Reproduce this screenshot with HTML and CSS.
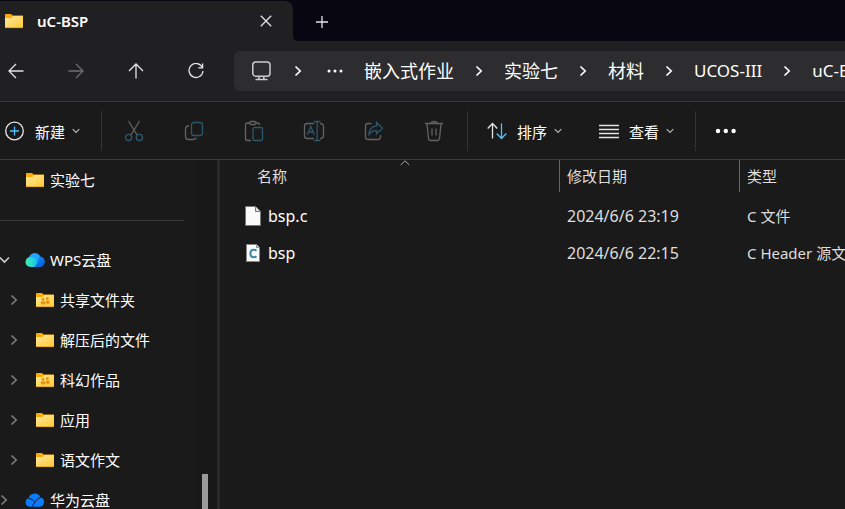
FILE: index.html
```html
<!DOCTYPE html>
<html lang="zh-CN">
<head>
    <meta charset="UTF-8">
    <meta name="viewport" content="width=device-width, initial-scale=1.0">
    <title>uC-BSP</title>
    <link rel="stylesheet" href="styles.css">
</head>
<body>
    <svg class="defs" aria-hidden="true">
        <defs>
            <linearGradient id="folder-fill" x1="0" y1="0" x2="1" y2="1">
                <stop offset="0" stop-color="#ffe9a0"/>
                <stop offset="1" stop-color="#ffc830"/>
            </linearGradient>
            <linearGradient id="cloud-left" x1="0" y1="0" x2="1" y2="0">
                <stop offset="0" stop-color="#43edb0"/>
                <stop offset="1" stop-color="#08b9fb"/>
            </linearGradient>
            <linearGradient id="cloud-right" x1="0" y1="0" x2="1" y2="1">
                <stop offset="0" stop-color="#1596ff"/>
                <stop offset="1" stop-color="#0754d8"/>
            </linearGradient>
            <symbol id="folder" viewBox="0 0 18 16">
                <path d="M0 1.5Q0 1 .6 1H6l1.6 1.5H18V9H0z" fill="#f9ab0c"/>
                <path d="M0 5h6.5L8 3h9.4q.6 0 .6.6V14q0 1-1 1H1q-1 0-1-1z" fill="url(#folder-fill)"/>
                <path d="M.2 14.6h17.6" stroke="#e8a92b"/>
            </symbol>
            <symbol id="shared-folder" viewBox="0 0 18 16">
                <use href="#folder"/>
                <g fill="#e4950d">
                    <circle cx="7" cy="7.3" r="1.4"/>
                    <circle cx="11.3" cy="6.5" r="1.4"/>
                    <rect x="4.8" y="9.3" width="4.4" height="3.2" rx="1"/>
                    <rect x="9.7" y="8.6" width="3.8" height="3.2" rx="1"/>
                </g>
            </symbol>
            <symbol id="right" viewBox="0 0 8 12">
                <path d="M1.5 1.5 6.2 6l-4.7 4.5" fill="none" stroke="currentColor" stroke-width="1.7"/>
            </symbol>
            <symbol id="down" viewBox="0 0 8 6">
                <path d="M.7 1.2 4 4.5l3.3-3.3" fill="none" stroke="currentColor" stroke-width="1.1"/>
            </symbol>
        </defs>
    </svg>

    <header>
        <div class="titlebar">
            <div class="tab">
                <svg class="folder"><use href="#folder"/></svg>
                <span class="tab-title">uC-BSP</span>
                <button class="close" aria-label="关闭">
                    <svg width="12" height="12" viewBox="0 0 12 12"><path d="m.8.8 10.4 10.4M11.2.8.8 11.2"/></svg>
                </button>
            </div>
            <button class="new-tab" aria-label="新建标签页">
                <svg width="14" height="14" viewBox="0 0 14 14"><path d="M7 1v12M1 7h12"/></svg>
            </button>
        </div>

        <nav class="navbar">
            <div class="nav-buttons">
                <button aria-label="后退"><svg width="16" height="16" viewBox="0 0 16 16"><path d="M15.5 8H1M8 1 1 8l7 7"/></svg></button>
                <button class="off" disabled aria-label="前进"><svg width="16" height="16" viewBox="0 0 16 16"><path d="M.5 8H15M8 1l7 7-7 7"/></svg></button>
                <button aria-label="上移"><svg width="16" height="16" viewBox="0 0 16 16"><path d="M8 15.5V1M1 8l7-7 7 7"/></svg></button>
                <button aria-label="刷新"><svg width="16" height="16" viewBox="0 0 16 16"><path d="M14.4 4.6A7 7 0 1 0 15 8M14.6.5v4.3h-4.3"/></svg></button>
            </div>
            <div class="address">
                <svg class="monitor" width="22" height="20" viewBox="0 0 22 20">
                    <rect x="1.8" y="1" width="17.2" height="14.2" rx="3"/>
                    <path d="M8 15.5v3M12.8 15.5v3M4.5 18.6h12"/>
                </svg>
                <svg class="right"><use href="#right"/></svg>
                <button class="more-path" aria-label="更多">
                    <svg width="20" height="4" viewBox="0 0 20 4"><circle cx="6" cy="2" r="1.5"/><circle cx="12" cy="2" r="1.5"/><circle cx="18" cy="2" r="1.5"/></svg>
                </button>
                <a href="#">嵌入式作业</a>
                <svg class="right"><use href="#right"/></svg>
                <a href="#">实验七</a>
                <svg class="right"><use href="#right"/></svg>
                <a href="#">材料</a>
                <svg class="right"><use href="#right"/></svg>
                <a class="latin" href="#">UCOS-III</a>
                <svg class="right"><use href="#right"/></svg>
                <a class="latin" href="#">uC-BSP</a>
            </div>
        </nav>
    </header>

    <div class="toolbar">
        <button class="command">
            <svg width="20" height="20" viewBox="0 0 20 20"><circle cx="9.5" cy="10" r="8.8"/><path class="blue" d="M9.5 5.5v9M5 10h9"/></svg>
            <span>新建</span>
            <svg class="down"><use href="#down"/></svg>
        </button>
        <span class="divider"></span>
        <div class="icons">
            <button disabled aria-label="剪切">
                <svg width="20" height="22" viewBox="0 0 20 22"><path d="m4.5 1 8.6 14M15.5 1 6.9 15"/><g class="blue"><circle cx="4.6" cy="17.5" r="3.1"/><circle cx="15.4" cy="17.5" r="3.1"/></g></svg>
            </button>
            <button disabled aria-label="复制">
                <svg width="20" height="20" viewBox="0 0 20 20"><path d="M5 5H4Q1.500 5 1.500 8v7.500q0 3 3 3H9q3 0 3-2"/><rect class="blue" x="7.500" y="1.500" width="11" height="13" rx="2.500"/></svg>
            </button>
            <button disabled aria-label="粘贴">
                <svg width="20" height="22" viewBox="0 0 20 22"><path d="M6 3H3.500Q1.500 3 1.500 5v13.500q0 2 2 2H7M11 3h2.500q2 0 2 2"/><rect x="5.500" y="1.500" width="6.500" height="3" rx="1.500"/><rect class="blue" x="9" y="7.500" width="9.500" height="13" rx="1.500"/></svg>
            </button>
            <button disabled aria-label="重命名">
                <svg width="22" height="22" viewBox="0 0 22 22"><path d="M11 3.500H4q-2.500 0-2.500 2.500v10q0 2.500 2.500 2.500h7M17 3.500q3.500 0 3.500 3v9q0 3-3.500 3"/><path class="blue" d="m4.200 15 3.600-8.500L11.400 15M5.300 12h5M14.200 2v18.500M11 1.500h6.500M11 20.500h6.500"/></svg>
            </button>
            <button disabled aria-label="共享">
                <svg width="20" height="20" viewBox="0 0 20 20"><path d="M7.500 2.500H4Q1.500 2.500 1.500 5v11q0 2.500 2.500 2.500h10q2.500 0 2.500-2.500v-2"/><path class="blue" d="M12.500 1.500 18.500 7.300l-6 5.700V9.700Q8 9.500 5 13.500 5.500 5.500 12.500 4.900z"/></svg>
            </button>
            <button disabled aria-label="删除">
                <svg width="20" height="22" viewBox="0 0 20 22"><path d="M1 3.500h18M7 3.500q0-2 3-2t3 2M3 4l1.500 14.500q.2 2 2 2h7q1.800 0 2-2L17 4M8 8.500v7M12 8.500v7"/></svg>
            </button>
        </div>
        <span class="divider"></span>
        <button class="command second">
            <svg width="20" height="18" viewBox="0 0 20 18"><path d="M5.500 16.500V1.500M.7 6.500l4.800-5 4.800 5"/><path class="blue" d="M14.500 1.500v15M9.700 11.500l4.800 5 4.800-5"/></svg>
            <span>排序</span>
            <svg class="down"><use href="#down"/></svg>
        </button>
        <button class="command view">
            <svg width="20" height="16" viewBox="0 0 20 16"><path d="M0 2.500h20M0 6.500h20M0 10.500h20M0 14.500h20"/></svg>
            <span>查看</span>
            <svg class="down"><use href="#down"/></svg>
        </button>
        <span class="divider last"></span>
        <button class="more" aria-label="查看更多">
            <svg width="22" height="6" viewBox="0 0 22 6"><circle cx="3" cy="3" r="2.200"/><circle cx="10.800" cy="3" r="2.200"/><circle cx="18.600" cy="3" r="2.200"/></svg>
        </button>
    </div>

    <main>
        <aside>
            <ul class="tree">
                <li><span class="arrow"></span><svg class="folder"><use href="#folder"/></svg>实验七</li>
                <li class="line"></li>
                <li>
                    <svg class="arrow open" viewBox="0 0 10 8"><path d="m0 1.500 4.500 4.500L9 1.500"/></svg>
                    <svg class="cloud" viewBox="0 0 20 16">
                        <circle cx="14.500" cy="9.800" r="5.200" fill="url(#cloud-right)"/>
                        <circle cx="9.800" cy="7" r="6" fill="#1da7ff"/>
                        <path d="M5.500 5Q9 5 12 9l3 6H5.500a5 5 0 0 1 0-10z" fill="url(#cloud-left)"/>
                        <path d="M14.500 4.600a5.200 5.200 0 0 1 0 10.400H9q2.500-1.500 3.500-6z" fill="url(#cloud-right)"/>
                    </svg>WPS云盘
                </li>
                <li class="child"><svg class="arrow"><use href="#right"/></svg><svg class="folder"><use href="#shared-folder"/></svg>共享文件夹</li>
                <li class="child"><svg class="arrow"><use href="#right"/></svg><svg class="folder"><use href="#folder"/></svg>解压后的文件</li>
                <li class="child"><svg class="arrow"><use href="#right"/></svg><svg class="folder"><use href="#shared-folder"/></svg>科幻作品</li>
                <li class="child"><svg class="arrow"><use href="#right"/></svg><svg class="folder"><use href="#folder"/></svg>应用</li>
                <li class="child"><svg class="arrow"><use href="#right"/></svg><svg class="folder"><use href="#folder"/></svg>语文作文</li>
                <li>
                    <svg class="arrow"><use href="#right"/></svg>
                    <svg class="cloud" viewBox="0 0 20 16">
                        <path d="M5 14.800A4.500 4.500 0 0 1 3.800 6 6.200 6.200 0 0 1 15.400 5.200 4.900 4.900 0 0 1 14.500 14.800z" fill="#0a7cff"/>
                        <path d="M3.600 6.500q4.400.2 6 3.500M16 5.300q-3.500.4-6 4.700l-3 4.600" fill="none" stroke="#1a1a1a" stroke-width="1"/>
                    </svg>华为云盘
                </li>
            </ul>
            <div class="scroll"><div class="thumb"></div></div>
        </aside>

        <section class="files">
            <table>
                <colgroup><col class="col-name"><col class="col-date"><col class="col-type"></colgroup>
                <thead>
                    <tr>
                        <th>名称<svg class="sorted" viewBox="0 0 10 6"><path d="M.7 5 5 .8 9.300 5"/></svg></th>
                        <th>修改日期</th>
                        <th>类型</th>
                    </tr>
                </thead>
                <tbody>
                    <tr>
                        <td>
                            <div class="name">
                                <svg width="16" height="20" viewBox="0 0 16 20"><path d="M.5.500h10l5 5v14H.5z" fill="#fafafa" stroke="#777"/><path d="M10.500.500v5h5" fill="#ddd" stroke="#777"/></svg>
                                bsp.c
                            </div>
                        </td>
                        <td class="date">2024/6/6 23:19</td>
                        <td class="type">C 文件</td>
                    </tr>
                    <tr>
                        <td>
                            <div class="name">
                                <svg width="16" height="20" viewBox="0 0 16 20"><path d="M1.500 1.500h10l3 3v14h-13z" fill="#fafafa" stroke="#888"/><path d="M11.500 1.500v3h3" fill="#ddd" stroke="#888"/><path d="M11.500 7.700Q10.400 6.700 8.800 6.700 5.400 6.700 5.400 10.500t3.400 3.800q1.600 0 2.700-1" fill="none" stroke="#3c87a8" stroke-width="2"/></svg>
                                bsp
                            </div>
                        </td>
                        <td class="date">2024/6/6 22:15</td>
                        <td class="type">C Header 源文件</td>
                    </tr>
                </tbody>
            </table>
        </section>
    </main>
</body>
</html>
```

FILE: styles.css
```css
* {
    box-sizing: border-box;
}
body {
    margin: 0;
    height: 100vh;
    display: flex;
    flex-direction: column;
    overflow: hidden;
    background: #1a1a1a;
    color: #fff;
    font-family: "Noto Sans", "Noto Sans CJK SC", sans-serif;
    font-size: 15px;
    line-height: 20px;
}
button {
    display: flex;
    align-items: center;
    justify-content: center;
    padding: 0;
    border: none;
    background: none;
    color: inherit;
    font: inherit;
}
svg {
    flex: none;
}
button svg {
    fill: none;
    stroke: #e4e4e4;
    stroke-width: 1.3;
}
.defs {
    position: absolute;
    width: 0;
    height: 0;
}
.folder {
    width: 18px;
    height: 16px;
}
.right {
    width: 8px;
    height: 12px;
}
.down {
    width: 8px;
    height: 6px;
}

/* Tabs */
.titlebar {
    display: flex;
    height: 41px;
    background: #080611;
}
.tab {
    position: relative;
    display: flex;
    align-items: center;
    width: 293px;
    margin-top: 1px;
    padding: 0 21px 0 5px;
    background: #202023;
    border-radius: 0 8px 0 0;
}
.tab::after {
    content: "";
    position: absolute;
    left: 100%;
    bottom: 0;
    width: 5px;
    height: 5px;
    background: radial-gradient(circle at 100% 0, transparent 5px, #202023 5px);
}
.tab-title {
    margin-left: 14px;
    font-size: 15px;
    font-weight: 600;
}
.close {
    margin-left: auto;
}
.new-tab {
    width: 58px;
    padding-top: 3px;
}

/* Navigation */
.navbar {
    display: flex;
    align-items: center;
    gap: 22px;
    height: 61px;
    background: #202023;
    border-bottom: 1px solid #3a3a3d;
}
.nav-buttons {
    display: flex;
    gap: 28px;
}
.nav-buttons button {
    width: 32px;
    height: 32px;
}
.off {
    opacity: 0.4;
}
.address {
    flex: 1;
    display: flex;
    align-items: center;
    gap: 21px;
    min-width: 0;
    height: 40px;
    padding-left: 17px;
    overflow: hidden;
    background: #2d2d2f;
    border-radius: 6px 0 0 6px;
    font-size: 18px;
    white-space: nowrap;
}
.address a {
    color: #fff;
    text-decoration: none;
}
.address .latin {
    font-size: 17px;
}
.monitor {
    fill: none;
    stroke: #ccc;
    stroke-width: 1.5;
}
.more-path svg,
.more svg {
    fill: #fff;
    stroke: none;
}

/* Commands */
.toolbar {
    display: flex;
    align-items: center;
    flex: none;
    height: 58px;
    padding-left: 5px;
    border-bottom: 1px solid #3c3c3c;
}
.command {
    display: flex;
    gap: 10px;
}
.command span {
    padding-top: 2px;
}
.command .down {
    margin-left: -3px;
    color: #bbb;
}
.divider {
    width: 1px;
    height: 40px;
    margin: 0 2px 0 21px;
    background: #333;
}
.blue,
button .blue {
    stroke: #4cc2ff;
}
.icons {
    display: flex;
}
.icons + .divider {
    margin: 0 19px 0 3px;
}
.icons button {
    width: 60px;
    height: 40px;
}
.icons svg {
    opacity: 0.36;
}
.view {
    margin-left: 37px;
}
.last {
    margin-right: 19px;
}

/* Folder tree */
main {
    flex: 1;
    display: flex;
    min-height: 0;
}
aside {
    display: flex;
    flex: none;
    width: 220px;
    overflow: hidden;
    border-right: 3px solid #292929;
}
.tree {
    flex: 1;
    margin: 0;
    padding: 0 10px 0 0;
    list-style: none;
}
.tree li {
    display: flex;
    align-items: center;
    height: 40px;
    white-space: nowrap;
}
.tree .child {
    padding-left: 10px;
}
.tree .line::before {
    content: "";
    width: 100%;
    height: 1px;
    background: #3a3a3a;
}
.arrow {
    width: 8px;
    height: 12px;
    margin-right: 18px;
    color: #7c7c7c;
}
.open {
    width: 10px;
    height: 8px;
    margin-right: 16px;
    fill: none;
    stroke: #ccc;
    stroke-width: 1.6;
}
.tree .folder {
    margin-right: 6px;
}
.cloud {
    width: 20px;
    height: 16px;
    margin: 0 5px 0 -1px;
}
.scroll {
    display: flex;
    flex-direction: column;
    justify-content: flex-end;
    width: 23px;
    padding-left: 8px;
    background: #181818;
}
.thumb {
    width: 6px;
    height: 10%;
    background: #9a9a9a;
}

/* File list */
.files {
    flex: 1;
    min-width: 0;
    overflow: hidden;
}
table {
    width: 100%;
    min-width: 680px;
    table-layout: fixed;
    border-collapse: separate;
    border-spacing: 0;
}
.col-name {
    width: 340px;
}
.col-date {
    width: 180px;
}
th {
    position: relative;
    height: 32px;
    padding: 0 7px;
    border-right: 1px solid #666;
    color: #dedede;
    font-weight: 400;
    text-align: left;
}
th:first-child {
    padding-left: 37px;
}
.sorted {
    position: absolute;
    top: 0;
    left: 180px;
    width: 10px;
    height: 6px;
    fill: none;
    stroke: #aaa;
}
tbody::before {
    content: "";
    display: block;
    height: 5px;
}
td {
    height: 37px;
    padding: 0 7px;
    color: #dedede;
    white-space: nowrap;
}
td:first-child {
    padding-left: 25px;
}
.name {
    display: flex;
    align-items: center;
    gap: 7px;
    color: #fff;
}
.name,
.date {
    font-size: 16px;
}
```
